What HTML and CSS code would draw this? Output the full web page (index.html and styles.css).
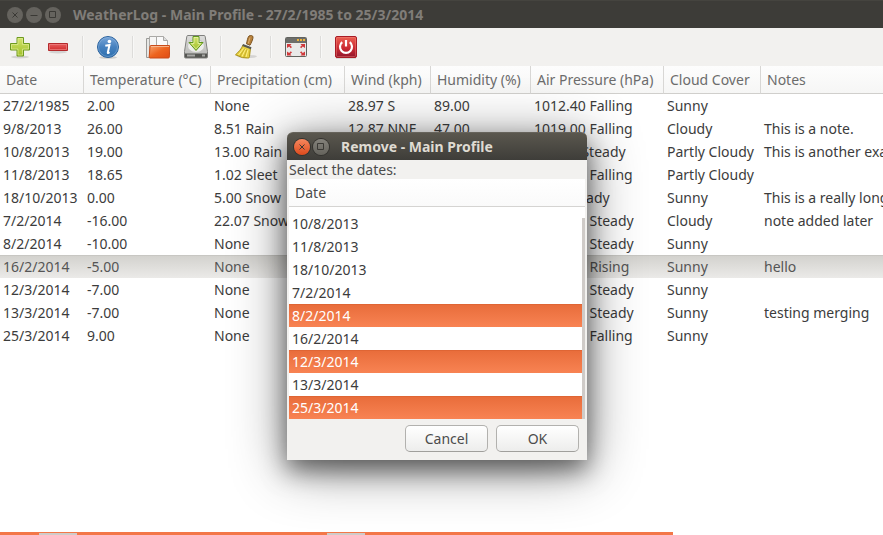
FILE: index.html
```html
<!DOCTYPE html>
<html lang="en">
<head>
<meta charset="utf-8">
<title>WeatherLog</title>
<link rel="stylesheet" href="styles.css">
</head>
<body>
<main class="window">
  <header class="titlebar titlebar-inactive">
    <button class="win-btn" aria-label="Close"><svg viewBox="0 0 16 16"><path d="M5.500 5.500l5 5M10.500 5.500l-5 5"/></svg></button>
    <button class="win-btn" aria-label="Minimize"><svg viewBox="0 0 16 16"><path d="M4.500 8.500h7"/></svg></button>
    <button class="win-btn" aria-label="Maximize"><svg viewBox="0 0 16 16"><path d="M4.500 4.500h6v6h-6z"/></svg></button>
    <h1 class="title">WeatherLog - Main Profile - 27/2/1985 to 25/3/2014</h1>
  </header>
  <nav class="toolbar" aria-label="Toolbar">
    <button class="tool" aria-label="Add">
      <svg viewBox="0 0 24 24">
        <defs><linearGradient id="green" x1="0" y1="0" x2="0" y2="1"><stop offset="0" stop-color="#d3e46c"/><stop offset="1" stop-color="#9fbf28"/></linearGradient></defs>
        <ellipse cx="12" cy="22" rx="9" ry="1.500" fill="#000" opacity=".12"/>
        <path d="M9 2.500h6.500v6h6v6.500h-6v6H9v-6H2.500V8.500H9z" fill="url(#green)" stroke="#6e9a1f"/>
        <path d="M10 3.500h4.500v6h6v4.500h-6v6H10v-6H3.500V9.500H10z" fill="none" stroke="#e4efa0" opacity=".6"/>
      </svg>
    </button>
    <button class="tool" aria-label="Remove">
      <svg viewBox="0 0 24 24">
        <defs><linearGradient id="red" x1="0" y1="0" x2="0" y2="1"><stop offset="0" stop-color="#e86060"/><stop offset="1" stop-color="#cf2b2b"/></linearGradient></defs>
        <ellipse cx="12" cy="17" rx="9" ry="1.500" fill="#000" opacity=".12"/>
        <path d="M2.500 8.500h19v7h-19z" fill="url(#red)" stroke="#b32a2c"/>
        <path d="M3.500 9.500h17v5h-17z" fill="none" stroke="#ef8585" opacity=".7"/>
      </svg>
    </button>
    <span class="sep"></span>
    <button class="tool" aria-label="Information">
      <svg viewBox="0 0 24 24">
        <defs><linearGradient id="blue" x1="0" y1="0" x2="0" y2="1"><stop offset="0" stop-color="#78a5d8"/><stop offset=".5" stop-color="#4681bf"/><stop offset="1" stop-color="#2d6fae"/></linearGradient></defs>
        <ellipse cx="12" cy="22.500" rx="9" ry="1.300" fill="#000" opacity=".15"/>
        <circle cx="12" cy="12" r="10.500" fill="url(#blue)" stroke="#2a629d"/>
        <circle cx="12" cy="12" r="9.500" fill="none" stroke="#92b8e0" opacity=".5"/>
        <circle cx="13.400" cy="6.500" r="1.800" fill="#fff"/>
        <path d="M9.300 10.700l4.200-.8-1.700 7.600c-.2 1 .8.500 1.800-.2" fill="none" stroke="#fff" stroke-width="2"/>
      </svg>
    </button>
    <span class="sep"></span>
    <button class="tool" aria-label="Import">
      <svg viewBox="0 0 24 24">
        <defs><linearGradient id="orange" x1="0" y1="0" x2="1" y2="1"><stop offset="0" stop-color="#f8a56f"/><stop offset=".5" stop-color="#ed641f"/><stop offset="1" stop-color="#e04a12"/></linearGradient></defs>
        <path d="M.5 3.500h5v19h-5z" fill="#e7e7e5" stroke="#9a9a97"/>
        <path d="M3.500 1.500h8l3 3v14h-11z" fill="#f6f6f5" stroke="#aaa9a6"/>
        <path d="M10.500 1.500h7l4 4v10h-11z" fill="#fafafa" stroke="#aaa9a6"/>
        <path d="M17.500 1.500v4h4" fill="#ddd" stroke="#aaa9a6"/>
        <path d="M4 11.500q0-1 1-1h18q1 0 .9 1l-.6 10.500q0 1-1 1H4q-.8 0-.8-1z" fill="url(#orange)" stroke="#c94b18"/>
        <path d="M5 11.500h18" stroke="#f9c3a0" opacity=".8"/>
      </svg>
    </button>
    <button class="tool" aria-label="Export">
      <svg viewBox="0 0 24 24">
        <defs><linearGradient id="disk" x1="0" y1="0" x2="0" y2="1"><stop offset="0" stop-color="#dededc"/><stop offset="1" stop-color="#b5b5b3"/></linearGradient></defs>
        <path d="M4 .5h16q1 0 1.200 1l2.300 15v5.500q0 1-1 1h-21q-1 0-1-1v-5.500l2.300-15q.2-1 1.200-1z" fill="url(#disk)" stroke="#80807e"/>
        <ellipse cx="12" cy="11" rx="8.500" ry="6.500" fill="#ececea" stroke="#c2c2bf"/>
        <path d="M1 18.500h22v3.500q0 .8-.8.800H1.800q-.8 0-.8-.8z" fill="#555652"/>
        <path d="M3 20.500h8M18 20.500h3" stroke="#a8a8a5" stroke-width="2"/>
        <path d="M9 1.500h6v6h4l-7 8-7-8h4z" fill="url(#green)" stroke="#5f981c"/>
        <path d="M10 2.500h4v6h2.700l-4.700 5.400-4.700-5.400H10z" fill="none" stroke="#edf6b5" opacity=".7"/>
      </svg>
    </button>
    <span class="sep"></span>
    <button class="tool" aria-label="Clear">
      <svg viewBox="0 0 24 24">
        <ellipse cx="13" cy="21.500" rx="10" ry="1.600" fill="#000" opacity=".12"/>
        <path d="M15 1c1.500-1 3.800-.8 4 1 .2 2-1.800 6-3 8.200l-3.500-1.400c.6-2.700 1.200-6.600 2.500-7.800z" fill="#b8813b" stroke="#7d5420"/>
        <path d="M16 2.500l-1.700 6" stroke="#dbb071"/>
        <path d="M9 10l7.500 3-1 8.500c-.2 1.400-.8 1.700-2 1.500l-5-.4-7-2.800c2.800-2.500 6-5.800 7.500-9.800z" fill="#e6cf3e" stroke="#a88f16"/>
        <path d="M9.500 13.500l-5 6.500M11.500 14l-3.500 7.500M14 14.500l-2 7.500" stroke="#fff08a"/>
        <path d="M11 13.500l-5 7.500M13 14.500l-3 7.500" stroke="#b39b20" stroke-width=".6"/>
        <path d="M9 9l8.500 3.200-.6 2L8.300 11z" fill="#555753"/>
      </svg>
    </button>
    <span class="sep"></span>
    <button class="tool" aria-label="Fullscreen">
      <svg viewBox="0 0 24 24">
        <rect x="1.500" y="2.500" width="21" height="19" rx="1" fill="#e9e9e8" stroke="#62635f"/>
        <path d="M2 3h20v5H2z" fill="#6d6e6a"/>
        <path d="M13 4h2v2h-2zM16 4h2v2h-2zM19 4h2v2h-2z" fill="#f0b43a"/>
        <path d="M3 9h4.500L6.200 10.500 8 12l-1.200 1.200-1.600-1.600L3 13zM21 9h-4.500l1.300 1.500L16 12l1.200 1.200 1.600-1.600L21 13zM3 20.500h4.500L6.200 19 8 17.500l-1.200-1.200-1.600 1.600L3 16.500zM21 20.500h-4.500l1.300-1.500L16 17.500l1.200-1.200 1.600 1.600 2.200-1.400z" fill="#d0393b"/>
      </svg>
    </button>
    <span class="sep"></span>
    <button class="tool" aria-label="Quit">
      <svg viewBox="0 0 24 24">
        <defs><linearGradient id="power" x1="0" y1="0" x2="0" y2="1"><stop offset="0" stop-color="#ec6152"/><stop offset=".55" stop-color="#cc2b33"/><stop offset="1" stop-color="#90152c"/></linearGradient></defs>
        <path d="M2 23h20" stroke="#000" opacity=".2"/>
        <rect x="1.500" y="1.500" width="21" height="21" rx="1.500" fill="url(#power)" stroke="#a81c26"/>
        <rect x="2.500" y="2.500" width="19" height="19" rx="1" fill="none" stroke="#f58e82" opacity=".4"/>
        <path d="M8.200 7.200a6 6 0 1 0 7.600 0" fill="none" stroke="#fff" stroke-width="2.200"/>
        <path d="M12 5v6.500" stroke="#fff" stroke-width="2.200"/>
      </svg>
    </button>
  </nav>

  <table class="log">
    <colgroup><col class="c-date"><col class="c-temp"><col class="c-prec"><col class="c-wind"><col class="c-hum"><col class="c-air"><col class="c-cloud"><col></colgroup>
    <thead>
      <tr><th>Date</th><th>Temperature (°C)</th><th>Precipitation (cm)</th><th>Wind (kph)</th><th>Humidity (%)</th><th>Air Pressure (hPa)</th><th>Cloud Cover</th><th>Notes</th></tr>
    </thead>
    <tbody>
      <tr><td>27/2/1985</td><td>2.00</td><td>None</td><td>28.97 S</td><td>89.00</td><td>1012.40 Falling</td><td>Sunny</td><td></td></tr>
      <tr><td>9/8/2013</td><td>26.00</td><td>8.51 Rain</td><td>12.87 NNE</td><td>47.00</td><td>1019.00 Falling</td><td>Cloudy</td><td>This is a note.</td></tr>
      <tr><td>10/8/2013</td><td>19.00</td><td>13.00 Rain</td><td></td><td></td><td>999.00 Steady</td><td>Partly Cloudy</td><td>This is another example note.</td></tr>
      <tr><td>11/8/2013</td><td>18.65</td><td>1.02 Sleet</td><td></td><td></td><td>1010.00 Falling</td><td>Partly Cloudy</td><td></td></tr>
      <tr><td>18/10/2013</td><td>0.00</td><td>5.00 Snow</td><td></td><td></td><td>0.00 Steady</td><td>Sunny</td><td>This is a really long note.</td></tr>
      <tr><td>7/2/2014</td><td>-16.00</td><td>22.07 Snow</td><td></td><td></td><td>1010.00 Steady</td><td>Cloudy</td><td>note added later</td></tr>
      <tr><td>8/2/2014</td><td>-10.00</td><td>None</td><td></td><td></td><td>1010.00 Steady</td><td>Sunny</td><td></td></tr>
      <tr class="current"><td>16/2/2014</td><td>-5.00</td><td>None</td><td></td><td></td><td>1010.00 Rising</td><td>Sunny</td><td>hello</td></tr>
      <tr><td>12/3/2014</td><td>-7.00</td><td>None</td><td></td><td></td><td>1010.00 Steady</td><td>Sunny</td><td></td></tr>
      <tr><td>13/3/2014</td><td>-7.00</td><td>None</td><td></td><td></td><td>1010.00 Steady</td><td>Sunny</td><td>testing merging</td></tr>
      <tr><td>25/3/2014</td><td>9.00</td><td>None</td><td></td><td></td><td>1010.00 Falling</td><td>Sunny</td><td></td></tr>
    </tbody>
  </table>
  <div class="strip"><span class="thumb"></span><span class="thumb"></span></div>
</main>

<section class="dialog" role="dialog" aria-labelledby="dialog-title">
  <header class="titlebar">
    <button class="win-btn win-close" aria-label="Close"><svg viewBox="0 0 16 16"><path d="M5.500 5.500l5 5M10.500 5.500l-5 5"/></svg></button>
    <button class="win-btn" aria-label="Maximize"><svg viewBox="0 0 16 16"><path d="M4.500 4.500h6v6h-6z"/></svg></button>
    <h2 class="title" id="dialog-title">Remove - Main Profile</h2>
  </header>
  <div class="dialog-body">
    <p class="prompt" id="prompt">Select the dates:</p>
    <div class="list-head">Date</div>
    <ul class="dates" role="listbox" aria-multiselectable="true" aria-labelledby="prompt">
      <li role="option">9/8/2013</li>
      <li role="option">10/8/2013</li>
      <li role="option">11/8/2013</li>
      <li role="option">18/10/2013</li>
      <li role="option">7/2/2014</li>
      <li role="option" aria-selected="true">8/2/2014</li>
      <li role="option">16/2/2014</li>
      <li role="option" aria-selected="true">12/3/2014</li>
      <li role="option">13/3/2014</li>
      <li role="option" aria-selected="true">25/3/2014</li>
    </ul>
    <div class="actions">
      <button class="action">Cancel</button>
      <button class="action">OK</button>
    </div>
  </div>
</section>
</body>
</html>
```
FILE: styles.css
```css
* { box-sizing: border-box; }

body {
  margin: 0;
  background: #fff;
  color: #3c3c3c;
  font: 14px/23px "Noto Sans", "Open Sans", sans-serif;
  overflow: hidden;
}

button { font: inherit; padding: 0; border: 0; background: none; }

.window {
  display: flex;
  flex-direction: column;
  min-height: 100vh;
}

/* Title bars */
.titlebar {
  display: flex;
  align-items: center;
  gap: 3px;
  height: 28px;
  padding: 0 7px;
  background: linear-gradient(#5a574e, #3e3d39);
  border-top: 1px solid #66635b;
  border-radius: 6px 6px 0 0;
  color: #dfdbd2;
}

.titlebar-inactive {
  background: #3d3c38;
  border-top-color: #45443f;
  border-radius: 0;
  color: #807d78;
}

.title {
  margin: 0 0 0 9px;
  font-size: 14px;
  line-height: 20px;
  font-weight: 700;
  white-space: nowrap;
}

.win-btn {
  width: 16px;
  height: 16px;
  border-radius: 50%;
  background: linear-gradient(#84827b, #65635c);
  box-shadow: 0 0 0 1px #33322e;
}

.win-btn svg { display: block; fill: none; stroke: #3a3935; }
.titlebar-inactive .win-btn { background: #65635e; box-shadow: none; }
.win-close { background: linear-gradient(#f6885f, #dd4a1c); }

/* Toolbar */
.toolbar {
  display: flex;
  align-items: center;
  height: 38px;
  padding-left: 1px;
  background: #f2f1ef;
}

.tool {
  display: grid;
  place-items: center;
  width: 38px;
  height: 38px;
}

.tool svg { width: 24px; height: 24px; }

.sep {
  width: 2px;
  height: 22px;
  margin: 0 5px;
  background: #dddcda;
  border-right: 1px solid #f8f8f7;
}

/* Weather table */
.log {
  width: 100%;
  table-layout: fixed;
  border-spacing: 0;
  white-space: nowrap;
}

.c-date { width: 84px; }
.c-temp { width: 127px; }
.c-prec { width: 134px; }
.c-wind { width: 86px; }
.c-hum { width: 100px; }
.c-air { width: 133px; }
.c-cloud { width: 97px; }

.log th {
  height: 28px;
  padding: 0 0 0 6px;
  background: linear-gradient(#fdfdfd, #f6f6f5);
  border-right: 1px solid #d8d7d5;
  border-bottom: 1px solid #d0cfcc;
  color: #6c6c6c;
  font-weight: 400;
  text-align: left;
}

.log th:last-child { border-right: 0; }

.log td {
  height: 23px;
  padding: 0 0 0 3px;
  overflow: hidden;
}

.log .current td {
  background: linear-gradient(#d2d1cd, #ebeae8);
  box-shadow: inset 0 1px #c8c7c3;
  color: #555;
}

.strip {
  display: flex;
  gap: 250px;
  width: 76.2%;
  height: 3px;
  margin-top: auto;
  padding: 1px 0 0 39px;
  background: #f37748;
}

.thumb { width: 38px; background: #cfcbc8; }

/* Dialog */
.dialog {
  position: absolute;
  top: 132px;
  left: 287px;
  width: 300px;
  border-radius: 6px 6px 0 0;
  background: #f2f1ef;
  box-shadow: 0 10px 24px rgba(0, 0, 0, .5), 0 8px 56px rgba(0, 0, 0, .45);
}

.dialog-body { padding: 0 2px 8px; }

.prompt { margin: 0; line-height: 19px; color: #4c4c4c; }

.list-head {
  height: 28px;
  padding-left: 6px;
  background: linear-gradient(#fff, #fafafa);
  border-bottom: 1px solid #d5d4d2;
  line-height: 27px;
  color: #4c4c4c;
}

/* Scrolled to the end: earlier rows overflow above the visible area */
.dates {
  position: relative;
  display: flex;
  flex-direction: column;
  justify-content: flex-end;
  height: 212px;
  margin: 0;
  padding: 0 3px 0 0;
  overflow: hidden;
  background: #fff;
  list-style: none;
}

.dates::after {
  content: "";
  position: absolute;
  top: 11px;
  right: 0;
  bottom: 0;
  width: 3px;
  background: #cfcbc8;
}

.dates li { flex: none; height: 23px; padding-left: 3px; }

.dates [aria-selected="true"] {
  background: linear-gradient(#e86c3a, #f88353);
  box-shadow: inset 0 1px #df6534;
  color: #fff;
}

.actions {
  display: flex;
  justify-content: flex-end;
  gap: 8px;
  padding: 6px 6px 0 0;
}

.action {
  width: 83px;
  height: 27px;
  border: 1px solid #b2b1ae;
  border-bottom-color: #a09f9c;
  border-radius: 5px;
  background: linear-gradient(#fff, #ededec);
  color: #4c4c4c;
}
```
